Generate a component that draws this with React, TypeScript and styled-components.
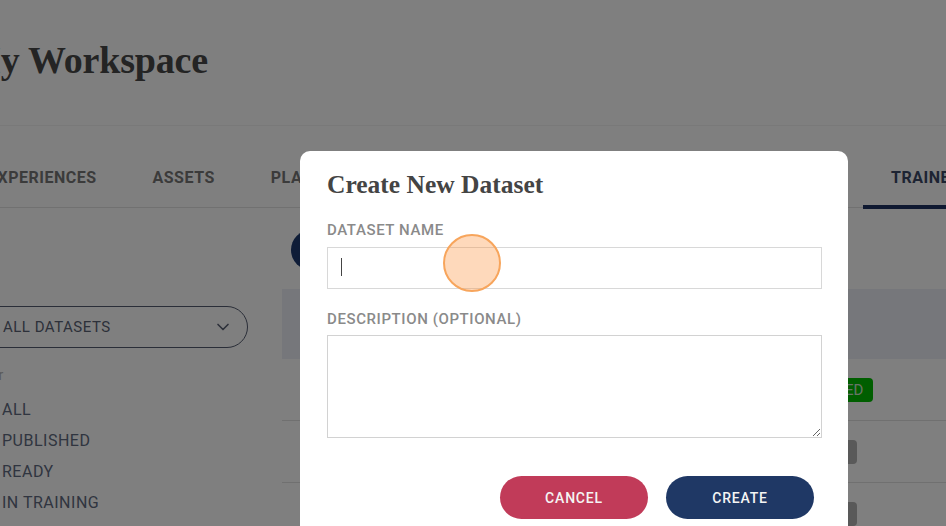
import { createGlobalStyle } from "styled-components";
import styled from "styled-components";
import { ChevronDown, Plus } from "lucide-react";

const GlobalStyle = createGlobalStyle`
  html, body {
    margin: 0;
    padding: 0;
    overflow: hidden;
    background: #ffffff;
  }
  * {
    box-sizing: border-box;
  }
`;

const tabs = [
  "EXPERIENCES",
  "ASSETS",
  "PLATFORMS",
  "INTEGRATIONS",
  "ANALYTICS",
  "REPORTING",
];

const filters = ["ALL", "PUBLISHED", "READY", "IN TRAINING"];

const rows = [
  { name: "Retail Shelf Images", status: "PUBLISHED" },
  { name: "Warehouse Scans", status: "READY" },
  { name: "Product Photos", status: "READY" },
];

const App = () => {
  return (
    <>
      <GlobalStyle />
      <Page>
        <Header>
          <PageTitle>My Workspace</PageTitle>
        </Header>
        <TabBar>
          {tabs.map((t) => (
            <Tab key={t}>{t}</Tab>
          ))}
          <Tab active>TRAINER</Tab>
        </TabBar>
        <Body>
          <Sidebar>
            <SelectPill>
              <span>ALL DATASETS</span>
              <ChevronDown size={20} strokeWidth={2} />
            </SelectPill>
            <FilterLabel>Filter</FilterLabel>
            <FilterList>
              {filters.map((f) => (
                <FilterItem key={f}>{f}</FilterItem>
              ))}
            </FilterList>
          </Sidebar>
          <Main>
            <Toolbar>
              <RoundButton>
                <Plus size={20} color="#fff" />
              </RoundButton>
            </Toolbar>
            <Table>
              <TableHead>
                <span>NAME</span>
                <span>STATUS</span>
              </TableHead>
              {rows.map((r) => (
                <TableRow key={r.name}>
                  <span>{r.name}</span>
                  <StatusCell>
                    <Badge published={r.status === "PUBLISHED"}>{r.status}</Badge>
                  </StatusCell>
                </TableRow>
              ))}
            </Table>
          </Main>
        </Body>
      </Page>

      <Overlay>
        <Modal>
          <ModalTitle>Create New Dataset</ModalTitle>
          <FieldLabel>DATASET NAME</FieldLabel>
          <InputWrap>
            <TextInput type="text" />
            <Caret />
          </InputWrap>
          <FieldLabel>DESCRIPTION (OPTIONAL)</FieldLabel>
          <TextArea />
          <Actions>
            <ActionButton variant="cancel">CANCEL</ActionButton>
            <ActionButton variant="create">CREATE</ActionButton>
          </Actions>
        </Modal>
      </Overlay>
      <ClickMark />
    </>
  );
};

export default App;

const Page = styled.div`
  width: 1100px;
  margin-left: -40px;
  font-family: Roboto, "Noto Sans", sans-serif;
`;

const Header = styled.div`
  height: 126px;
  padding: 38px 0 0 5px;
  border-bottom: 1px solid #f2f2f2;
`;

const PageTitle = styled.h1`
  margin: 0;
  font-family: "Liberation Serif", serif;
  font-weight: 700;
  font-size: 38px;
  line-height: 44px;
  color: #484848;
  letter-spacing: -0.2px;
`;

const TabBar = styled.div`
  display: flex;
  height: 82px;
  align-items: flex-end;
  border-bottom: 1px solid #e2e2e2;
`;

const Tab = styled.div<{ active?: boolean }>`
  padding: 0 28px 17px;
  font-size: 16px;
  font-weight: 700;
  line-height: 20px;
  letter-spacing: 0.5px;
  color: ${(p) => (p.active ? "#3a4866" : "#777777")};
  border-bottom: 4px solid ${(p) => (p.active ? "#1e3262" : "transparent")};
  margin-bottom: -2px;
  white-space: nowrap;
`;

const Body = styled.div`
  display: flex;
  gap: 34px;
`;

const Sidebar = styled.aside`
  width: 288px;
  padding: 98px 0 0 10px;
`;

const SelectPill = styled.div`
  display: flex;
  align-items: center;
  justify-content: space-between;
  height: 42px;
  padding: 0 14px 0 32px;
  border: 1px solid #545c70;
  border-radius: 21px;
  font-size: 15px;
  letter-spacing: 0.5px;
  color: #5a6275;
`;

const FilterLabel = styled.div`
  margin-top: 17px;
  padding-left: 2px;
  font-size: 14px;
  line-height: 20px;
  color: #b4b4b4;
`;

const FilterList = styled.ul`
  list-style: none;
  margin: 9px 0 0;
  padding: 0 0 0 32px;
`;

const FilterItem = styled.li`
  font-size: 16px;
  line-height: 31px;
  letter-spacing: 0.5px;
  color: #606a80;
`;

const Main = styled.main`
  flex: 1;
`;

const Toolbar = styled.div`
  display: flex;
  padding: 22px 0 19px 9px;
`;

const RoundButton = styled.div`
  width: 40px;
  height: 40px;
  border-radius: 50%;
  background: #1e3a70;
  display: flex;
  align-items: center;
  justify-content: center;
`;

const Table = styled.div`
  display: flex;
  flex-direction: column;
`;

const TableHead = styled.div`
  display: grid;
  grid-template-columns: 468px 100px 1fr;
  align-items: center;
  height: 70px;
  padding-left: 24px;
  background: #eceef6;
  font-size: 13px;
  font-weight: 700;
  color: #777;
`;

const TableRow = styled.div`
  display: grid;
  grid-template-columns: 468px 100px 1fr;
  align-items: center;
  height: 62px;
  padding-left: 24px;
  border-bottom: 1px solid #e0e0e0;
  font-size: 15px;
  color: #555;
`;

const StatusCell = styled.span`
  display: flex;
  justify-content: center;
`;

const Badge = styled.span<{ published?: boolean }>`
  display: inline-block;
  height: 24px;
  line-height: 24px;
  padding: 0 10px;
  border-radius: 4px;
  font-size: 15px;
  white-space: nowrap;
  color: ${(p) => (p.published ? "#cfe8cf" : "#f2f2f2")};
  background: ${(p) => (p.published ? "#00bc00" : "#b2b2b2")};
`;

const Overlay = styled.div`
  position: fixed;
  inset: 0;
  background: rgba(0, 0, 0, 0.5);
  display: flex;
  align-items: flex-start;
  padding: 151px 0 0 300px;
`;

const Modal = styled.div`
  width: 548px;
  min-height: 420px;
  background: #ffffff;
  border-radius: 10px;
  padding: 19px 26px 40px 27px;
  font-family: Roboto, "Noto Sans", sans-serif;
`;

const ModalTitle = styled.h2`
  margin: 0 0 21px;
  font-family: "Liberation Serif", serif;
  font-weight: 700;
  font-size: 25.5px;
  line-height: 30px;
  color: #444444;
`;

const FieldLabel = styled.label`
  display: block;
  margin-bottom: 8px;
  font-size: 15px;
  line-height: 18px;
  font-weight: 500;
  letter-spacing: 0.6px;
  color: #8a8a8a;
`;

const InputWrap = styled.div`
  position: relative;
  margin-bottom: 21px;
`;

const TextInput = styled.input`
  display: block;
  width: 100%;
  height: 42px;
  padding: 0 14px;
  border: 1px solid #d8d8d8;
  border-radius: 0;
  outline: none;
  font-size: 16px;
  font-family: Roboto, sans-serif;
  caret-color: transparent;
`;

const Caret = styled.span`
  position: absolute;
  left: 14px;
  top: 11px;
  width: 1px;
  height: 18px;
  background: #444;
`;

const TextArea = styled.textarea`
  display: block;
  width: 100%;
  height: 103px;
  margin-top: -1px;
  border: 1px solid #d2d2d2;
  border-radius: 0;
  outline: none;
  font-family: Roboto, sans-serif;
`;

const Actions = styled.div`
  display: flex;
  justify-content: flex-end;
  gap: 18px;
  margin-top: 38px;
  padding-right: 8px;
`;

const ActionButton = styled.button<{ variant: "cancel" | "create" }>`
  width: 148px;
  height: 43px;
  border: none;
  border-radius: 22px;
  background: ${(p) => (p.variant === "cancel" ? "#c13b59" : "#1f3865")};
  color: #f4f4f4;
  font-family: Roboto, sans-serif;
  font-size: 14px;
  font-weight: 500;
  letter-spacing: 0.8px;
`;

const ClickMark = styled.div`
  position: fixed;
  left: 443px;
  top: 234px;
  width: 58px;
  height: 58px;
  border-radius: 50%;
  background: rgba(251, 146, 60, 0.35);
  border: 2px solid #f7a55c;
`;
